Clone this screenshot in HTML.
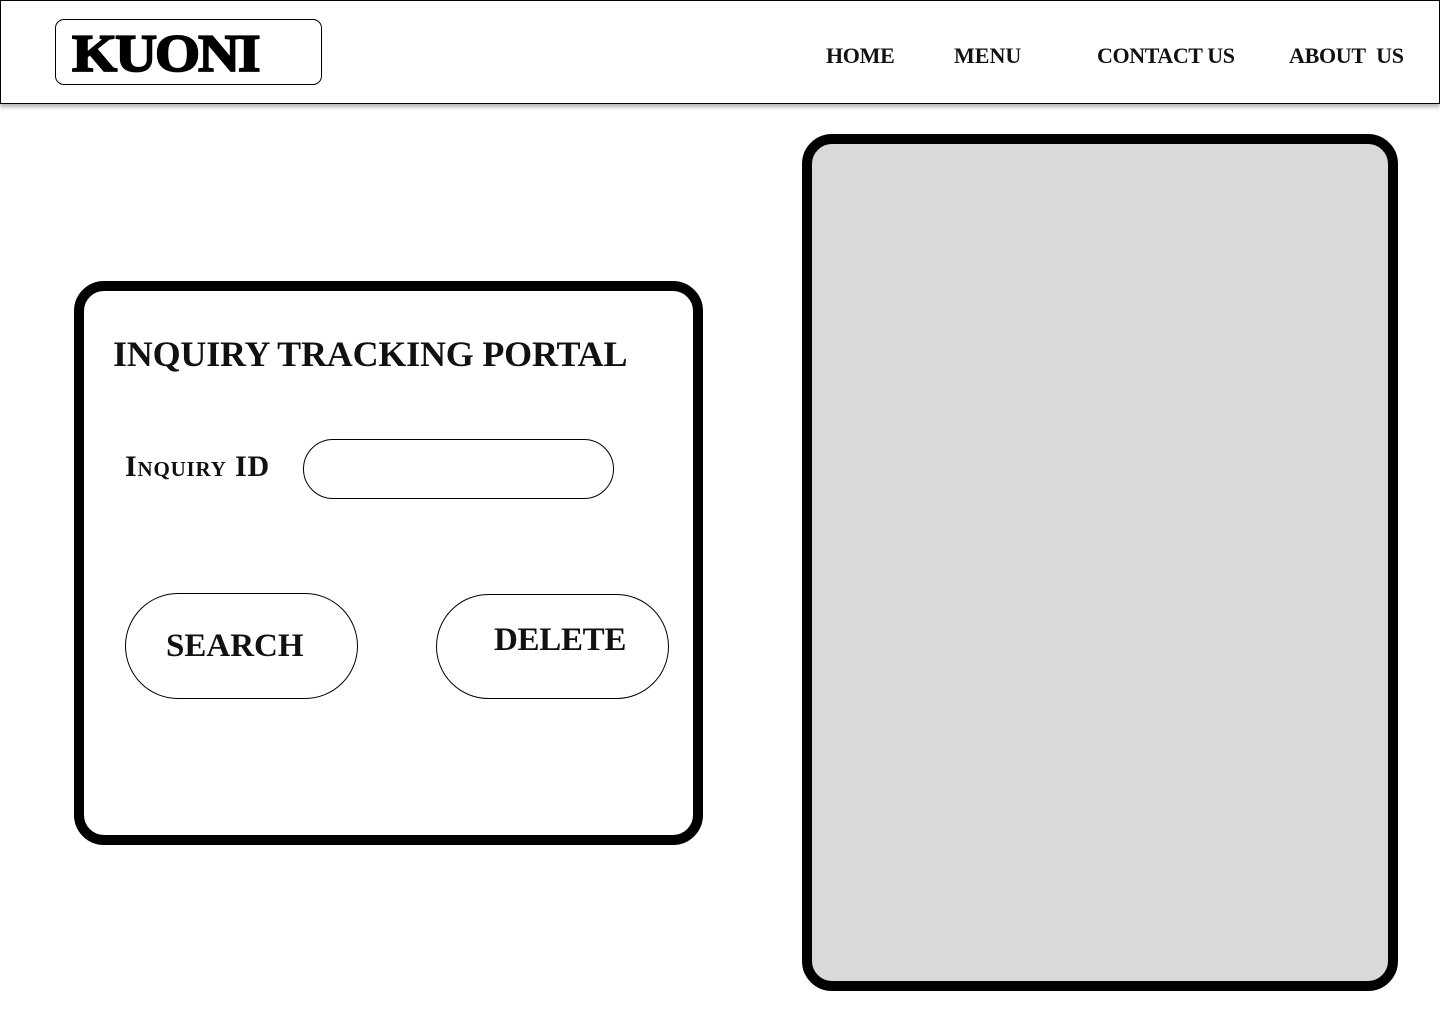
<!DOCTYPE html>
<html><head><style>
body{margin:0;width:1440px;height:1024px;background:#fff;position:relative;overflow:hidden;font-family:"Liberation Serif",serif;}
.a{position:absolute;box-sizing:border-box;}
.t{position:absolute;font-weight:bold;white-space:nowrap;color:#111;}
</style></head><body>
<div class="a" style="left:0;top:0;width:1440px;height:104px;border:1px solid #000;box-shadow:0 3px 4px rgba(0,0,0,.3)"></div>
<div class="a" style="left:55px;top:19px;width:267px;height:66px;border:1px solid #000;border-radius:9px"></div>
<div class="t" style="left:72px;top:22px;font-size:58px;letter-spacing:-2px;color:#000;-webkit-text-stroke:2px #000;transform:scaleY(0.92);transform-origin:top left">KUONI</div>
<div class="t" style="left:826px;top:43px;font-size:22px;letter-spacing:-0.3px">HOME</div>
<div class="t" style="left:954px;top:43px;font-size:22px">MENU</div>
<div class="t" style="left:1097px;top:43px;font-size:22px;letter-spacing:-0.4px">CONTACT US</div>
<div class="t" style="left:1289px;top:43px;font-size:22px;letter-spacing:-0.3px">ABOUT&nbsp; US</div>
<div class="a" style="left:802px;top:134px;width:596px;height:857px;border:10px solid #000;border-radius:30px;background:#d9d9d9"></div>
<div class="a" style="left:74px;top:281px;width:629px;height:564px;border:10px solid #000;border-radius:30px"></div>
<div class="t" style="left:113px;top:333px;font-size:36px;letter-spacing:-0.2px">INQUIRY TRACKING PORTAL</div>
<div class="t" style="left:125px;top:450px;font-size:30px;font-variant:small-caps;letter-spacing:0.8px">Inquiry ID</div>
<div class="a" style="left:303px;top:439px;width:311px;height:60px;border:1px solid #000;border-radius:30px"></div>
<div class="a" style="left:125px;top:593px;width:233px;height:106px;border:1px solid #000;border-radius:53px"></div>
<div class="t" style="left:166px;top:628px;font-size:33px">SEARCH</div>
<div class="a" style="left:436px;top:594px;width:233px;height:105px;border:1px solid #000;border-radius:53px"></div>
<div class="t" style="left:494px;top:622px;font-size:33px;letter-spacing:-0.3px">DELETE</div>
</body></html>
